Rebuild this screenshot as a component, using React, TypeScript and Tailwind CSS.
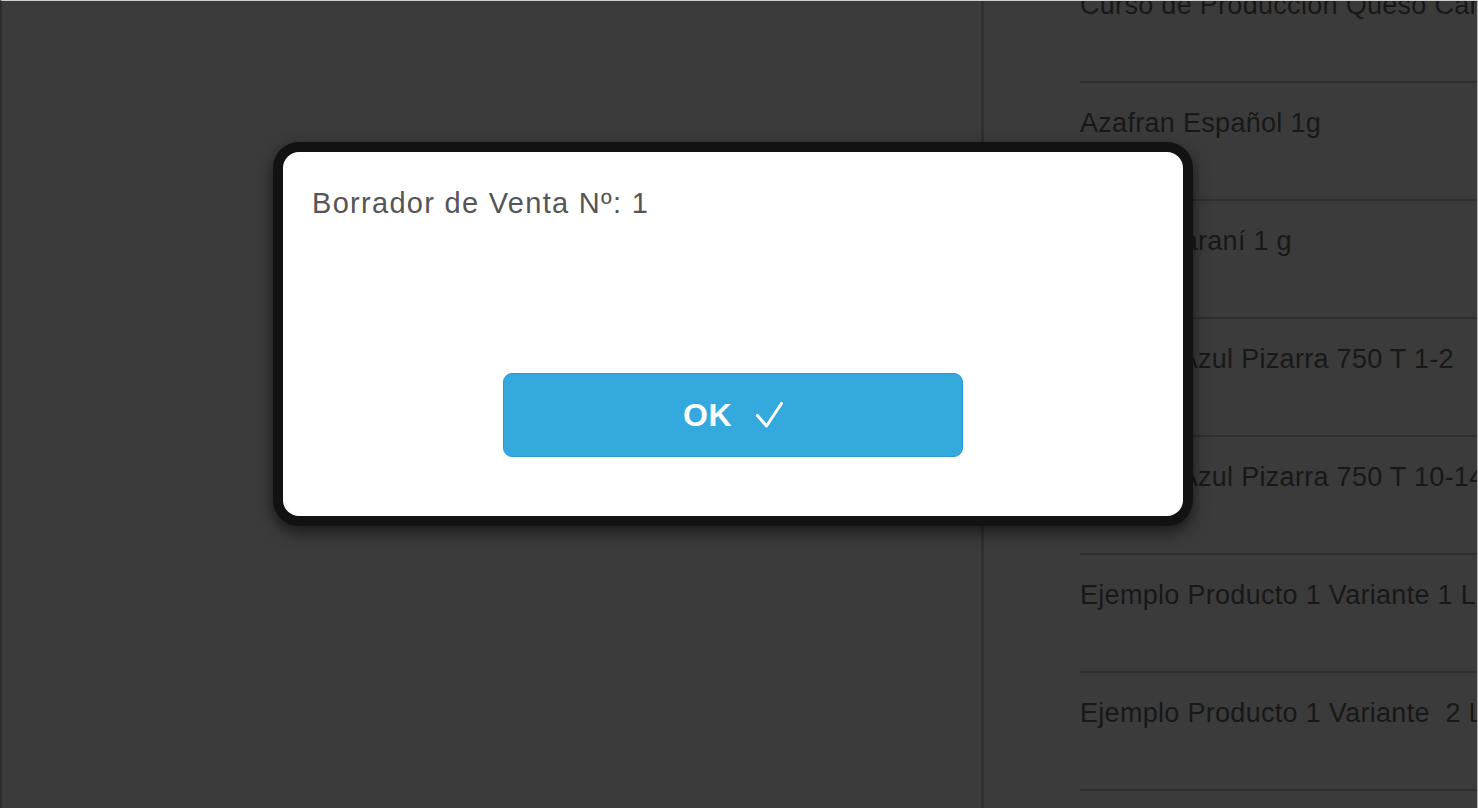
import { ReactNode } from "react";

const products = [
  "Curso de Producción Queso Camembert",
  "Azafran Español 1g",
  "Café Guaraní 1 g",
  "Camisa Azul Pizarra 750 T 1-2",
  "Camisa Azul Pizarra 750 T 10-14",
  "Ejemplo Producto 1 Variante 1 Lote A",
  "Ejemplo Producto 1 Variante  2 Lote B",
  "Ejemplo Producto 2",
];

const Row = ({ children }: { children: ReactNode }) => (
  <div className="h-[118px] shrink-0 flex flex-col">
    <div className="flex-1 pt-[26px] text-[27px] leading-[28px] tracking-[0.3px] text-[#181818] whitespace-pre overflow-hidden">
      {children}
    </div>
    <div className="h-[2px] bg-[#2f2f2f]" />
  </div>
);

const CheckIcon = () => (
  <svg width="27" height="26" viewBox="0 0 27 26" fill="none">
    <path
      d="M1.5 13.5 L10.5 24 L25.5 1.5"
      stroke="white"
      strokeWidth="3"
      strokeLinecap="round"
      strokeLinejoin="round"
    />
  </svg>
);

export default function App() {
  return (
    <div
      className="relative h-[808px] w-full overflow-hidden bg-[#3b3b3b] border-t border-t-[#cfcfcf] border-r border-r-[#b5b5b5] border-l-2 border-l-[#2c2c2c] flex"
      style={{ fontFamily: '"Liberation Sans", Arial, sans-serif' }}
    >
      {/* left panel */}
      <div className="w-[979px] shrink-0" />
      <div className="w-[3px] shrink-0 bg-[#303030]" />

      {/* product list */}
      <div className="flex-1 min-w-0 pl-[96px] overflow-hidden">
        <div className="-mt-[36px] flex flex-col">
          {products.map((p) => (
            <Row key={p}>{p}</Row>
          ))}
        </div>
      </div>

      {/* modal */}
      <div className="absolute left-[271px] top-[141px] w-[920px] p-[10px] rounded-[26px] bg-[#121212] shadow-[0_6px_16px_rgba(0,0,0,0.6)]">
        <div className="bg-white rounded-[16px] h-[364px] pt-[37px] px-[29px] flex flex-col">
          <p className="text-[29px] leading-[28px] tracking-[1.3px] text-[#555555]">
            Borrador de Venta Nº: 1
          </p>
          <div className="mt-[156px] flex justify-center">
            <button className="w-[460px] h-[84px] rounded-[9px] bg-[#34a9dd] border border-[#2d9bd0] flex items-center justify-center gap-[24px]">
              <span className="text-white font-bold text-[32px] leading-none tracking-[0.5px]">
                OK
              </span>
              <CheckIcon />
            </button>
          </div>
        </div>
      </div>
    </div>
  );
}
